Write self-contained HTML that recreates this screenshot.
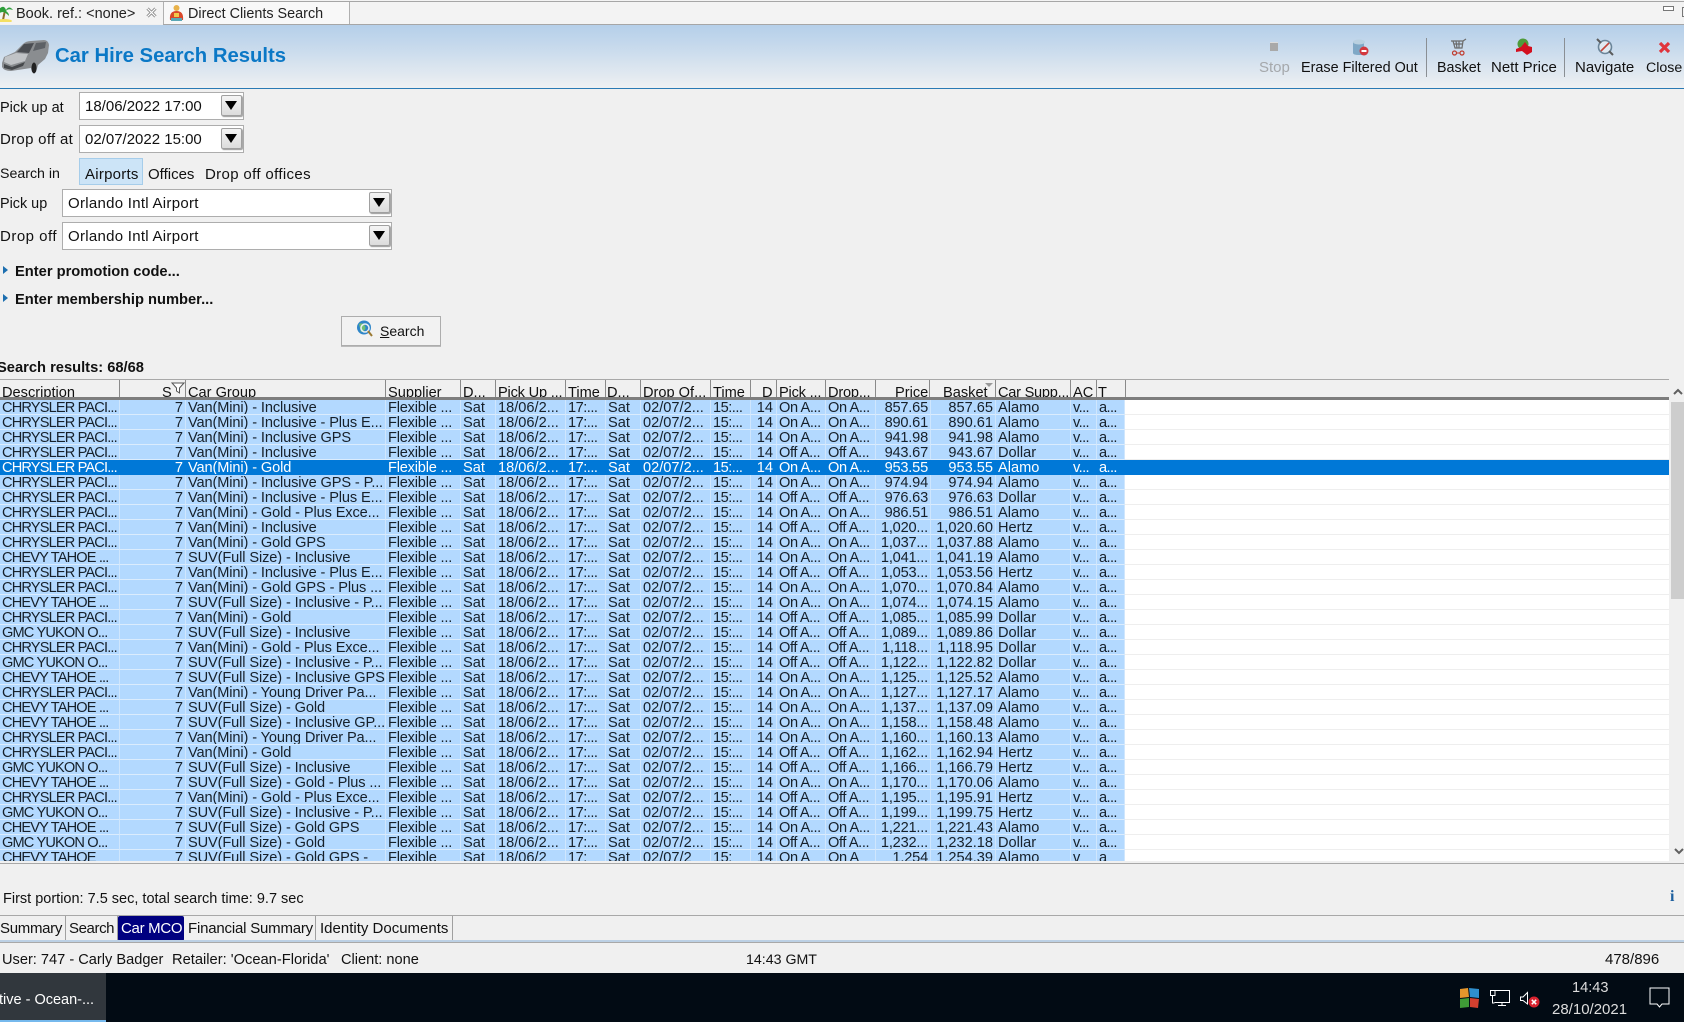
<!DOCTYPE html>
<html><head><meta charset="utf-8"><title>Car Hire Search Results</title>
<style>
html,body{margin:0;padding:0;width:1684px;height:1022px;overflow:hidden;background:#f0f0f0;font-family:"Liberation Sans",sans-serif;font-size:15px;color:#111}
.a{position:absolute}
.t{position:absolute;white-space:nowrap;line-height:20px}
.b{font-weight:bold}
.field{position:absolute;background:#fff;border:1px solid #adadad;box-sizing:border-box}
.dd{position:absolute;width:21px;height:21px;background:linear-gradient(#f4f4f4,#dcdcdc);border:1px solid #a0a0a0;box-sizing:border-box;border-radius:2px;box-shadow:1px 1px 1px #999}
.dd:after{content:"";position:absolute;left:3px;top:5px;border-left:6.5px solid transparent;border-right:6.5px solid transparent;border-top:9px solid #000}
.exp{position:absolute;left:3px;border-left:5px solid #1d6fb0;border-top:4.5px solid transparent;border-bottom:4.5px solid transparent}
#hd{position:absolute;left:0;top:380px;width:1669px;height:17px;background:#f0f0f0;overflow:hidden;border-bottom:3px solid #7d7d7d}
#hd span{position:absolute;top:3px;line-height:20px;white-space:nowrap;font-size:14.6px}
#hd i{position:absolute;top:0;width:1px;height:17px;background:#8a8a8a}
#lines{position:absolute;left:0;top:400px;width:1669px;height:461px;overflow:hidden;background:repeating-linear-gradient(#fff 0,#fff 14px,#eeeeee 14px,#eeeeee 15px)}
#sel{position:absolute;left:0;top:60px;width:1669px;height:15px;background:#0078d7}
table{position:absolute;left:0;top:0;width:1125px;table-layout:fixed;border-collapse:separate;border-spacing:0;font-size:14.6px}
td{height:15px;padding:3px 0 0 2px;line-height:10px;white-space:nowrap;overflow:hidden;background:#b3d9ff;border-bottom:1px solid #dbecfd;border-right:1px solid #cfe6fd;box-sizing:border-box;color:#16202a;vertical-align:top}
tr.s td{background:#0078d7;color:#fff;border-color:#0078d7}
td.r{text-align:right;padding:3px 2px 0 0}
td:nth-child(1){letter-spacing:-.85px}
td:nth-child(3){letter-spacing:-.12px}
td:nth-child(4){letter-spacing:-.2px}
td:nth-child(7),td:nth-child(10){letter-spacing:-.5px}
td:nth-child(11){padding-right:3px}
td:nth-child(12),td:nth-child(13){letter-spacing:-.4px}
td:nth-child(14){letter-spacing:-.2px}
td:nth-child(17),td:nth-child(18){letter-spacing:-.6px}
.tab{position:absolute;top:916px;height:25px;line-height:25px;border-right:1px solid #a0a0a0;box-sizing:border-box;white-space:nowrap;font-size:15px;padding-left:5px}
</style></head><body>

<div class="a" style="left:0;top:0;width:1684px;height:24px;background:#f3f3f3"></div>
<div class="a" style="left:0;top:1px;width:1684px;height:1px;background:#a6a6a6"></div>
<div class="a" style="left:163px;top:24px;width:1521px;height:1px;background:#a6a6a6"></div>
<div class="a" style="left:163px;top:2px;width:185px;height:22px;background:#f8f8f8;border-left:1px solid #b0b0b0;border-right:1px solid #b0b0b0"></div>
<svg class="a" style="left:0;top:4px" width="14" height="18" viewBox="0 0 14 18"><path d="M5 6L3 16" stroke="#8a6d2a" stroke-width="2" fill="none"/><path d="M-1 5Q4 0 6 6Q9 1 13 6Q8 4 6 7Q9 9 9 12Q5 8 3 8Q0 8 -1 10Z" fill="#2e9e3a"/><ellipse cx="4" cy="17" rx="8" ry="2" fill="#f3df63"/></svg>
<div class="t" style="left:16px;top:4px;color:#222;font-size:14.5px">Book. ref.: &lt;none&gt;</div>
<svg class="a" style="left:146px;top:7px" width="11" height="11" viewBox="0 0 11 11"><path d="M1.5 1.5L9.5 9.5M9.5 1.5L1.5 9.5" stroke="#888" stroke-width="3"/><path d="M1.5 1.5L9.5 9.5M9.5 1.5L1.5 9.5" stroke="#fff" stroke-width="1.2"/></svg>
<svg class="a" style="left:168px;top:4px" width="17" height="18" viewBox="0 0 17 18"><circle cx="8.5" cy="4" r="3" fill="#e9b24a"/><path d="M2 16Q1 7 8.5 7Q16 7 15 16Z" fill="#d9482b"/><rect x="6" y="9" width="5" height="4" fill="#f2c94c"/><rect x="3" y="14" width="11" height="3" fill="#5aa7b5"/></svg>
<div class="t" style="left:188px;top:4px;color:#222;font-size:14.4px">Direct Clients Search</div>
<div class="a" style="left:1663px;top:6px;width:9px;height:3px;border:1px solid #777;background:#fff"></div>
<div class="a" style="left:1682px;top:7px;width:4px;height:8px;border:1px solid #777"></div>

<div class="a" style="left:0;top:25px;width:1684px;height:63px;background:linear-gradient(#b5cfe9,#c4d8ec 30%,#eef0f2)"></div>
<div class="a" style="left:0;top:88px;width:1684px;height:1px;background:#2a7ab4"></div>
<svg class="a" style="left:1px;top:39px" width="49" height="36" viewBox="0 0 49 36"><path d="M1 24L3 18L14 13L22 5Q25 2 30 2L43 1Q47 1 48 6L47 14L44 20L37 26L35 33L31 33L30 29L10 32Q3 32 1 28Z" fill="#8a8d90"/><path d="M4 18L15 14L27 15L24 22L10 26L3 23Z" fill="#c0c3c6"/><path d="M16 13L23 5L33 4L28 14Z" fill="#4a4d52"/><path d="M35 4L45 3L44 9L32 12Z" fill="#5d6166"/><path d="M3 25L11 28L24 23L22 27L11 31L3 29Z" fill="#45484b"/><ellipse cx="33" cy="29" rx="2.5" ry="5.500" fill="#222"/></svg>
<div class="t b" style="left:55px;top:44px;font-size:20.3px;line-height:24px;color:#0b78c6">Car Hire Search Results</div>

<div class="a" style="left:1270px;top:42px;width:8px;height:8px;background:#a9a9a9;border-top:1px solid #ddd"></div>
<div class="t" style="left:1259px;top:58px;color:#a5a8ab">Stop</div>
<svg class="a" style="left:1352px;top:39px" width="17" height="17" viewBox="0 0 17 17"><path d="M1 3V14Q1 16 7 16H12V3Z" fill="#7fa8c6"/><ellipse cx="7" cy="3" rx="6" ry="2.5" fill="#b9d0e0"/><circle cx="12" cy="12" r="4.5" fill="#d3383e"/><rect x="9.5" y="11" width="5" height="2" fill="#fff"/></svg>
<div class="t" style="left:1301px;top:58px;font-size:14.4px">Erase Filtered Out</div>
<div class="a" style="left:1426px;top:38px;width:1px;height:39px;background:#8a8f94"></div>
<svg class="a" style="left:1451px;top:38px" width="16" height="18" viewBox="0 0 16 18"><path d="M0 3H12L15 1M2 3L4 10H11L12 3M5 3L6 10M8 3V10M3 6H12" stroke="#6b6b6b" stroke-width="1.2" fill="none"/><circle cx="3.5" cy="15" r="2" fill="none" stroke="#c0392b" stroke-width="1.2"/><circle cx="11" cy="15" r="2" fill="none" stroke="#c0392b" stroke-width="1.2"/><path d="M5 15H9" stroke="#c0392b"/></svg>
<div class="t" style="left:1437px;top:58px;font-size:14.3px">Basket</div>
<svg class="a" style="left:1516px;top:38px" width="17" height="17" viewBox="0 0 17 17"><circle cx="7" cy="6" r="5.5" fill="#4f9b3a"/><path d="M0 11L5 9L9 4L12 8L16 9L16 14L11 17L6 13L0 14Z" fill="#d3101f"/></svg>
<div class="t" style="left:1491px;top:58px">Nett Price</div>
<div class="a" style="left:1564px;top:38px;width:1px;height:39px;background:#8a8f94"></div>
<svg class="a" style="left:1596px;top:38px" width="18" height="18" viewBox="0 0 18 18"><circle cx="9" cy="9" r="6.5" fill="#dfe9f1" stroke="#6b8599" stroke-width="1.6"/><path d="M1 1L5 5M13 13L17 17" stroke="#5c5c5c" stroke-width="2"/><path d="M5 13L13 5" stroke="#c2453a" stroke-width="1.6"/></svg>
<div class="t" style="left:1575px;top:58px">Navigate</div>
<svg class="a" style="left:1658px;top:41px" width="13" height="13" viewBox="0 0 13 13"><path d="M2 2L11 11M11 2L2 11" stroke="#e0343c" stroke-width="3.2"/></svg>
<div class="t" style="left:1646px;top:58px;font-size:14.2px">Close</div>

<div class="t" style="left:0;top:98px;font-size:14.5px">Pick up at</div>
<div class="field" style="left:79px;top:92px;width:165px;height:28px"></div>
<div class="t" style="left:85px;top:97px">18/06/2022 17:00</div>
<div class="dd" style="left:221px;top:95px"></div>
<div class="t" style="left:0;top:130px;letter-spacing:.3px">Drop off at</div>
<div class="field" style="left:79px;top:125px;width:165px;height:28px"></div>
<div class="t" style="left:85px;top:130px">02/07/2022 15:00</div>
<div class="dd" style="left:221px;top:128px"></div>
<div class="t" style="left:0;top:164px;font-size:14.2px">Search in</div>
<div class="a" style="left:79px;top:158px;width:64px;height:27px;background:#cce4f7;border:1px solid #a6cdea;box-sizing:border-box"></div>
<div class="t" style="left:85px;top:165px;letter-spacing:.25px">Airports</div>
<div class="t" style="left:148px;top:165px">Offices</div>
<div class="t" style="left:205px;top:165px;letter-spacing:.35px">Drop off offices</div>
<div class="t" style="left:0;top:194px;font-size:14.4px">Pick up</div>
<div class="field" style="left:62px;top:189px;width:330px;height:28px"></div>
<div class="t" style="left:68px;top:194px;letter-spacing:.28px">Orlando Intl Airport</div>
<div class="dd" style="left:369px;top:192px"></div>
<div class="t" style="left:0;top:227px;letter-spacing:.5px">Drop off</div>
<div class="field" style="left:62px;top:222px;width:330px;height:28px"></div>
<div class="t" style="left:68px;top:227px;letter-spacing:.28px">Orlando Intl Airport</div>
<div class="dd" style="left:369px;top:225px"></div>
<div class="exp" style="top:266px"></div>
<div class="t b" style="left:15px;top:262px;font-size:14.7px">Enter promotion code...</div>
<div class="exp" style="top:294px"></div>
<div class="t b" style="left:15px;top:290px;font-size:14.7px">Enter membership number...</div>
<div class="a" style="left:341px;top:316px;width:100px;height:30px;background:#f2f2f2;border:1px solid #adadad;box-sizing:border-box;box-shadow:0 1px 0 #bbb"></div>
<svg class="a" style="left:356px;top:320px" width="17" height="17" viewBox="0 0 17 17"><circle cx="8" cy="7.5" r="7" fill="#2f86c9"/><path d="M3 4Q7 2 9 6T5 12Z" fill="#6fbf73"/><circle cx="9" cy="8" r="4" fill="none" stroke="#e9eef2" stroke-width="1.6"/><path d="M12 11L16 16" stroke="#9b7a33" stroke-width="2"/></svg>
<div class="t" style="left:380px;top:321px;font-size:14px"><u>S</u>earch</div>
<div class="t b" style="left:-3px;top:358px;font-size:14.7px">Search results: 68/68</div>

<div class="a" style="left:0;top:379px;width:1669px;height:1px;background:#a8a8a8"></div>
<div id="hd">
<span style="left:2px">Description</span><i style="left:119px"></i>
<span style="left:162px">S</span><svg class="a" style="left:171px;top:1px" width="14" height="14" viewBox="0 0 14 14"><path d="M1 2H13L8.5 7V12L5.5 10V7Z" fill="#fff" stroke="#555"/></svg><i style="left:185px"></i>
<span style="left:188px">Car Group</span><i style="left:385px"></i>
<span style="left:388px">Supplier</span><i style="left:460px"></i>
<span style="left:463px">D...</span><i style="left:495px"></i>
<span style="left:498px;letter-spacing:-.2px">Pick Up ...</span><i style="left:565px"></i>
<span style="left:568px">Time</span><i style="left:605px"></i>
<span style="left:607px">D...</span><i style="left:640px"></i>
<span style="left:643px">Drop Of...</span><i style="left:710px"></i>
<span style="left:713px">Time</span><i style="left:750px"></i>
<span style="left:762px">D</span><i style="left:776px"></i>
<span style="left:779px;letter-spacing:-.2px">Pick ...</span><i style="left:825px"></i>
<span style="left:828px;letter-spacing:-.2px">Drop...</span><i style="left:875px"></i>
<span style="left:895px">Price</span><i style="left:929px"></i>
<span style="left:943px">Basket</span><svg class="a" style="left:985px;top:3px" width="8" height="5"><path d="M0 0H8L4 4Z" fill="#999"/></svg><i style="left:995px"></i>
<span style="left:998px;letter-spacing:-.25px">Car Supp...</span><i style="left:1070px"></i>
<span style="left:1073px">AC</span><i style="left:1096px"></i>
<span style="left:1098px">T</span><i style="left:1125px"></i>
</div>

<div id="lines"><div id="sel"></div>
<table>
<colgroup><col style="width:120px"><col style="width:66px"><col style="width:200px"><col style="width:75px"><col style="width:35px"><col style="width:70px"><col style="width:40px"><col style="width:35px"><col style="width:70px"><col style="width:40px"><col style="width:26px"><col style="width:49px"><col style="width:50px"><col style="width:55px"><col style="width:65px"><col style="width:75px"><col style="width:26px"><col style="width:28px"></colgroup>
<tbody>
<tr><td>CHRYSLER PACI...</td><td class="r">7</td><td>Van(Mini) - Inclusive</td><td>Flexible ...</td><td>Sat</td><td>18/06/2...</td><td>17:...</td><td>Sat</td><td>02/07/2...</td><td>15:...</td><td class="r">14</td><td>On A...</td><td>On A...</td><td class="r">857.65</td><td class="r">857.65</td><td>Alamo</td><td>v...</td><td>a...</td></tr>
<tr><td>CHRYSLER PACI...</td><td class="r">7</td><td>Van(Mini) - Inclusive - Plus E...</td><td>Flexible ...</td><td>Sat</td><td>18/06/2...</td><td>17:...</td><td>Sat</td><td>02/07/2...</td><td>15:...</td><td class="r">14</td><td>On A...</td><td>On A...</td><td class="r">890.61</td><td class="r">890.61</td><td>Alamo</td><td>v...</td><td>a...</td></tr>
<tr><td>CHRYSLER PACI...</td><td class="r">7</td><td>Van(Mini) - Inclusive GPS</td><td>Flexible ...</td><td>Sat</td><td>18/06/2...</td><td>17:...</td><td>Sat</td><td>02/07/2...</td><td>15:...</td><td class="r">14</td><td>On A...</td><td>On A...</td><td class="r">941.98</td><td class="r">941.98</td><td>Alamo</td><td>v...</td><td>a...</td></tr>
<tr><td>CHRYSLER PACI...</td><td class="r">7</td><td>Van(Mini) - Inclusive</td><td>Flexible ...</td><td>Sat</td><td>18/06/2...</td><td>17:...</td><td>Sat</td><td>02/07/2...</td><td>15:...</td><td class="r">14</td><td>Off A...</td><td>Off A...</td><td class="r">943.67</td><td class="r">943.67</td><td>Dollar</td><td>v...</td><td>a...</td></tr>
<tr class="s"><td>CHRYSLER PACI...</td><td class="r">7</td><td>Van(Mini) - Gold</td><td>Flexible ...</td><td>Sat</td><td>18/06/2...</td><td>17:...</td><td>Sat</td><td>02/07/2...</td><td>15:...</td><td class="r">14</td><td>On A...</td><td>On A...</td><td class="r">953.55</td><td class="r">953.55</td><td>Alamo</td><td>v...</td><td>a...</td></tr>
<tr><td>CHRYSLER PACI...</td><td class="r">7</td><td>Van(Mini) - Inclusive GPS - P...</td><td>Flexible ...</td><td>Sat</td><td>18/06/2...</td><td>17:...</td><td>Sat</td><td>02/07/2...</td><td>15:...</td><td class="r">14</td><td>On A...</td><td>On A...</td><td class="r">974.94</td><td class="r">974.94</td><td>Alamo</td><td>v...</td><td>a...</td></tr>
<tr><td>CHRYSLER PACI...</td><td class="r">7</td><td>Van(Mini) - Inclusive - Plus E...</td><td>Flexible ...</td><td>Sat</td><td>18/06/2...</td><td>17:...</td><td>Sat</td><td>02/07/2...</td><td>15:...</td><td class="r">14</td><td>Off A...</td><td>Off A...</td><td class="r">976.63</td><td class="r">976.63</td><td>Dollar</td><td>v...</td><td>a...</td></tr>
<tr><td>CHRYSLER PACI...</td><td class="r">7</td><td>Van(Mini) - Gold - Plus Exce...</td><td>Flexible ...</td><td>Sat</td><td>18/06/2...</td><td>17:...</td><td>Sat</td><td>02/07/2...</td><td>15:...</td><td class="r">14</td><td>On A...</td><td>On A...</td><td class="r">986.51</td><td class="r">986.51</td><td>Alamo</td><td>v...</td><td>a...</td></tr>
<tr><td>CHRYSLER PACI...</td><td class="r">7</td><td>Van(Mini) - Inclusive</td><td>Flexible ...</td><td>Sat</td><td>18/06/2...</td><td>17:...</td><td>Sat</td><td>02/07/2...</td><td>15:...</td><td class="r">14</td><td>Off A...</td><td>Off A...</td><td class="r">1,020...</td><td class="r">1,020.60</td><td>Hertz</td><td>v...</td><td>a...</td></tr>
<tr><td>CHRYSLER PACI...</td><td class="r">7</td><td>Van(Mini) - Gold GPS</td><td>Flexible ...</td><td>Sat</td><td>18/06/2...</td><td>17:...</td><td>Sat</td><td>02/07/2...</td><td>15:...</td><td class="r">14</td><td>On A...</td><td>On A...</td><td class="r">1,037...</td><td class="r">1,037.88</td><td>Alamo</td><td>v...</td><td>a...</td></tr>
<tr><td>CHEVY TAHOE ...</td><td class="r">7</td><td>SUV(Full Size) - Inclusive</td><td>Flexible ...</td><td>Sat</td><td>18/06/2...</td><td>17:...</td><td>Sat</td><td>02/07/2...</td><td>15:...</td><td class="r">14</td><td>On A...</td><td>On A...</td><td class="r">1,041...</td><td class="r">1,041.19</td><td>Alamo</td><td>v...</td><td>a...</td></tr>
<tr><td>CHRYSLER PACI...</td><td class="r">7</td><td>Van(Mini) - Inclusive - Plus E...</td><td>Flexible ...</td><td>Sat</td><td>18/06/2...</td><td>17:...</td><td>Sat</td><td>02/07/2...</td><td>15:...</td><td class="r">14</td><td>Off A...</td><td>Off A...</td><td class="r">1,053...</td><td class="r">1,053.56</td><td>Hertz</td><td>v...</td><td>a...</td></tr>
<tr><td>CHRYSLER PACI...</td><td class="r">7</td><td>Van(Mini) - Gold GPS - Plus ...</td><td>Flexible ...</td><td>Sat</td><td>18/06/2...</td><td>17:...</td><td>Sat</td><td>02/07/2...</td><td>15:...</td><td class="r">14</td><td>On A...</td><td>On A...</td><td class="r">1,070...</td><td class="r">1,070.84</td><td>Alamo</td><td>v...</td><td>a...</td></tr>
<tr><td>CHEVY TAHOE ...</td><td class="r">7</td><td>SUV(Full Size) - Inclusive - P...</td><td>Flexible ...</td><td>Sat</td><td>18/06/2...</td><td>17:...</td><td>Sat</td><td>02/07/2...</td><td>15:...</td><td class="r">14</td><td>On A...</td><td>On A...</td><td class="r">1,074...</td><td class="r">1,074.15</td><td>Alamo</td><td>v...</td><td>a...</td></tr>
<tr><td>CHRYSLER PACI...</td><td class="r">7</td><td>Van(Mini) - Gold</td><td>Flexible ...</td><td>Sat</td><td>18/06/2...</td><td>17:...</td><td>Sat</td><td>02/07/2...</td><td>15:...</td><td class="r">14</td><td>Off A...</td><td>Off A...</td><td class="r">1,085...</td><td class="r">1,085.99</td><td>Dollar</td><td>v...</td><td>a...</td></tr>
<tr><td>GMC YUKON O...</td><td class="r">7</td><td>SUV(Full Size) - Inclusive</td><td>Flexible ...</td><td>Sat</td><td>18/06/2...</td><td>17:...</td><td>Sat</td><td>02/07/2...</td><td>15:...</td><td class="r">14</td><td>Off A...</td><td>Off A...</td><td class="r">1,089...</td><td class="r">1,089.86</td><td>Dollar</td><td>v...</td><td>a...</td></tr>
<tr><td>CHRYSLER PACI...</td><td class="r">7</td><td>Van(Mini) - Gold - Plus Exce...</td><td>Flexible ...</td><td>Sat</td><td>18/06/2...</td><td>17:...</td><td>Sat</td><td>02/07/2...</td><td>15:...</td><td class="r">14</td><td>Off A...</td><td>Off A...</td><td class="r">1,118...</td><td class="r">1,118.95</td><td>Dollar</td><td>v...</td><td>a...</td></tr>
<tr><td>GMC YUKON O...</td><td class="r">7</td><td>SUV(Full Size) - Inclusive - P...</td><td>Flexible ...</td><td>Sat</td><td>18/06/2...</td><td>17:...</td><td>Sat</td><td>02/07/2...</td><td>15:...</td><td class="r">14</td><td>Off A...</td><td>Off A...</td><td class="r">1,122...</td><td class="r">1,122.82</td><td>Dollar</td><td>v...</td><td>a...</td></tr>
<tr><td>CHEVY TAHOE ...</td><td class="r">7</td><td>SUV(Full Size) - Inclusive GPS</td><td>Flexible ...</td><td>Sat</td><td>18/06/2...</td><td>17:...</td><td>Sat</td><td>02/07/2...</td><td>15:...</td><td class="r">14</td><td>On A...</td><td>On A...</td><td class="r">1,125...</td><td class="r">1,125.52</td><td>Alamo</td><td>v...</td><td>a...</td></tr>
<tr><td>CHRYSLER PACI...</td><td class="r">7</td><td>Van(Mini) - Young Driver Pa...</td><td>Flexible ...</td><td>Sat</td><td>18/06/2...</td><td>17:...</td><td>Sat</td><td>02/07/2...</td><td>15:...</td><td class="r">14</td><td>On A...</td><td>On A...</td><td class="r">1,127...</td><td class="r">1,127.17</td><td>Alamo</td><td>v...</td><td>a...</td></tr>
<tr><td>CHEVY TAHOE ...</td><td class="r">7</td><td>SUV(Full Size) - Gold</td><td>Flexible ...</td><td>Sat</td><td>18/06/2...</td><td>17:...</td><td>Sat</td><td>02/07/2...</td><td>15:...</td><td class="r">14</td><td>On A...</td><td>On A...</td><td class="r">1,137...</td><td class="r">1,137.09</td><td>Alamo</td><td>v...</td><td>a...</td></tr>
<tr><td>CHEVY TAHOE ...</td><td class="r">7</td><td>SUV(Full Size) - Inclusive GP...</td><td>Flexible ...</td><td>Sat</td><td>18/06/2...</td><td>17:...</td><td>Sat</td><td>02/07/2...</td><td>15:...</td><td class="r">14</td><td>On A...</td><td>On A...</td><td class="r">1,158...</td><td class="r">1,158.48</td><td>Alamo</td><td>v...</td><td>a...</td></tr>
<tr><td>CHRYSLER PACI...</td><td class="r">7</td><td>Van(Mini) - Young Driver Pa...</td><td>Flexible ...</td><td>Sat</td><td>18/06/2...</td><td>17:...</td><td>Sat</td><td>02/07/2...</td><td>15:...</td><td class="r">14</td><td>On A...</td><td>On A...</td><td class="r">1,160...</td><td class="r">1,160.13</td><td>Alamo</td><td>v...</td><td>a...</td></tr>
<tr><td>CHRYSLER PACI...</td><td class="r">7</td><td>Van(Mini) - Gold</td><td>Flexible ...</td><td>Sat</td><td>18/06/2...</td><td>17:...</td><td>Sat</td><td>02/07/2...</td><td>15:...</td><td class="r">14</td><td>Off A...</td><td>Off A...</td><td class="r">1,162...</td><td class="r">1,162.94</td><td>Hertz</td><td>v...</td><td>a...</td></tr>
<tr><td>GMC YUKON O...</td><td class="r">7</td><td>SUV(Full Size) - Inclusive</td><td>Flexible ...</td><td>Sat</td><td>18/06/2...</td><td>17:...</td><td>Sat</td><td>02/07/2...</td><td>15:...</td><td class="r">14</td><td>Off A...</td><td>Off A...</td><td class="r">1,166...</td><td class="r">1,166.79</td><td>Hertz</td><td>v...</td><td>a...</td></tr>
<tr><td>CHEVY TAHOE ...</td><td class="r">7</td><td>SUV(Full Size) - Gold - Plus ...</td><td>Flexible ...</td><td>Sat</td><td>18/06/2...</td><td>17:...</td><td>Sat</td><td>02/07/2...</td><td>15:...</td><td class="r">14</td><td>On A...</td><td>On A...</td><td class="r">1,170...</td><td class="r">1,170.06</td><td>Alamo</td><td>v...</td><td>a...</td></tr>
<tr><td>CHRYSLER PACI...</td><td class="r">7</td><td>Van(Mini) - Gold - Plus Exce...</td><td>Flexible ...</td><td>Sat</td><td>18/06/2...</td><td>17:...</td><td>Sat</td><td>02/07/2...</td><td>15:...</td><td class="r">14</td><td>Off A...</td><td>Off A...</td><td class="r">1,195...</td><td class="r">1,195.91</td><td>Hertz</td><td>v...</td><td>a...</td></tr>
<tr><td>GMC YUKON O...</td><td class="r">7</td><td>SUV(Full Size) - Inclusive - P...</td><td>Flexible ...</td><td>Sat</td><td>18/06/2...</td><td>17:...</td><td>Sat</td><td>02/07/2...</td><td>15:...</td><td class="r">14</td><td>Off A...</td><td>Off A...</td><td class="r">1,199...</td><td class="r">1,199.75</td><td>Hertz</td><td>v...</td><td>a...</td></tr>
<tr><td>CHEVY TAHOE ...</td><td class="r">7</td><td>SUV(Full Size) - Gold GPS</td><td>Flexible ...</td><td>Sat</td><td>18/06/2...</td><td>17:...</td><td>Sat</td><td>02/07/2...</td><td>15:...</td><td class="r">14</td><td>On A...</td><td>On A...</td><td class="r">1,221...</td><td class="r">1,221.43</td><td>Alamo</td><td>v...</td><td>a...</td></tr>
<tr><td>GMC YUKON O...</td><td class="r">7</td><td>SUV(Full Size) - Gold</td><td>Flexible ...</td><td>Sat</td><td>18/06/2...</td><td>17:...</td><td>Sat</td><td>02/07/2...</td><td>15:...</td><td class="r">14</td><td>Off A...</td><td>Off A...</td><td class="r">1,232...</td><td class="r">1,232.18</td><td>Dollar</td><td>v...</td><td>a...</td></tr>
<tr><td>CHEVY TAHOE</td><td class="r">7</td><td>SUV(Full Size) - Gold GPS -</td><td>Flexible</td><td>Sat</td><td>18/06/2</td><td>17:</td><td>Sat</td><td>02/07/2</td><td>15:</td><td class="r">14</td><td>On A</td><td>On A</td><td class="r">1,254</td><td class="r">1,254.39</td><td>Alamo</td><td>v</td><td>a</td></tr>
</tbody>
</table>
</div>

<div class="a" style="left:1671px;top:380px;width:13px;height:482px;background:#f0f0f0"></div>
<div class="a" style="left:1671px;top:402px;width:13px;height:197px;background:#cdcdcd"></div>
<svg class="a" style="left:1673px;top:388px" width="10" height="7"><path d="M1 6L5 2L9 6" fill="none" stroke="#606060" stroke-width="2"/></svg>
<svg class="a" style="left:1674px;top:848px" width="10" height="7"><path d="M1 1L5 5L9 1" fill="none" stroke="#606060" stroke-width="2"/></svg>
<div class="a" style="left:0;top:863px;width:1684px;height:1px;background:#a8a8a8"></div>

<div class="t" style="left:3px;top:889px;font-size:14.5px">First portion: 7.5 sec, total search time: 9.7 sec</div>
<div class="t b" style="left:1670px;top:887px;font-family:'Liberation Serif',serif;font-size:16px;color:#1d5f9e">i</div>

<div class="a" style="left:0;top:915px;width:1684px;height:1px;background:#a8a8a8"></div>
<div class="tab" style="left:0;width:66px;padding-left:0;letter-spacing:-.3px">Summary</div>
<div class="tab" style="left:66px;width:52px;padding-left:3px;letter-spacing:-.4px">Search</div>
<div class="tab" style="left:118px;width:66px;padding-left:3px;background:#000080;color:#fff;border:none;border-radius:2px;letter-spacing:-.3px">Car MCO</div>
<div class="tab" style="left:184px;width:132px;padding-left:4px;letter-spacing:-.2px">Financial Summary</div>
<div class="tab" style="left:316px;width:137px;padding-left:4px">Identity Documents</div>
<div class="a" style="left:0;top:940px;width:1684px;height:2px;background:#bcd0e4"></div>
<div class="a" style="left:0;top:942px;width:1684px;height:1px;background:#a8a8a8"></div>

<div class="t" style="left:2px;top:950px;font-size:14.6px">User: 747 - Carly Badger</div>
<div class="t" style="left:172px;top:950px;font-size:14.7px">Retailer: 'Ocean-Florida'</div>
<div class="t" style="left:341px;top:950px;font-size:14.6px">Client: none</div>
<div class="t" style="left:746px;top:950px;font-size:14.2px">14:43 GMT</div>
<div class="t" style="left:1605px;top:950px;font-size:15px">478/896</div>

<div class="a" style="left:0;top:973px;width:1684px;height:49px;background:#020b14"></div>
<div class="a" style="left:0;top:973px;width:106px;height:49px;background:#31373d"></div>
<div class="a" style="left:0;top:1020px;width:106px;height:2px;background:#76b9ed"></div>
<div class="t" style="left:-1px;top:990px;color:#fff;font-size:14.5px">tive - Ocean-...</div>
<svg class="a" style="left:1459px;top:988px" width="20" height="20" viewBox="0 0 20 20"><path d="M1 1L9 0L10 9L1 10Z" fill="#e5962c"/><path d="M10 0L20 1L20 10L11 9Z" fill="#2f8fce"/><path d="M1 11L10 10L10 19L1 20Z" fill="#3f9b37"/><path d="M11 10L20 11L19 20L11 19Z" fill="#d3402f"/></svg>
<svg class="a" style="left:1489px;top:989px" width="22" height="18" viewBox="0 0 22 18" fill="none" stroke="#fff"><path d="M5.500 1.500H20.500V13.500H5.500M13 13.500V16.500M9 16.500H17M1.500 1.500H6V6.500H1.500ZM3.500 6.500V14H5.500"/></svg>
<svg class="a" style="left:1519px;top:991px" width="24" height="20" viewBox="0 0 24 20"><path d="M1.500 6H4L8.500 1.500V13L4 9.500H1.500Z" fill="none" stroke="#fff"/><circle cx="15" cy="11" r="5.500" fill="#d8232f"/><path d="M12.800 8.800L17.200 13.200M17.200 8.800L12.800 13.200" stroke="#fff" stroke-width="1.500"/></svg>
<div class="t" style="left:1572px;top:978px;color:#ddd;font-size:14.6px">14:43</div>
<div class="t" style="left:1552px;top:1000px;color:#ddd;font-size:15px">28/10/2021</div>
<svg class="a" style="left:1649px;top:987px" width="21" height="21" viewBox="0 0 21 21"><path d="M1 1H20V17H13L10.500 20L8 17H1Z" fill="none" stroke="#fff"/></svg>
</body></html>
